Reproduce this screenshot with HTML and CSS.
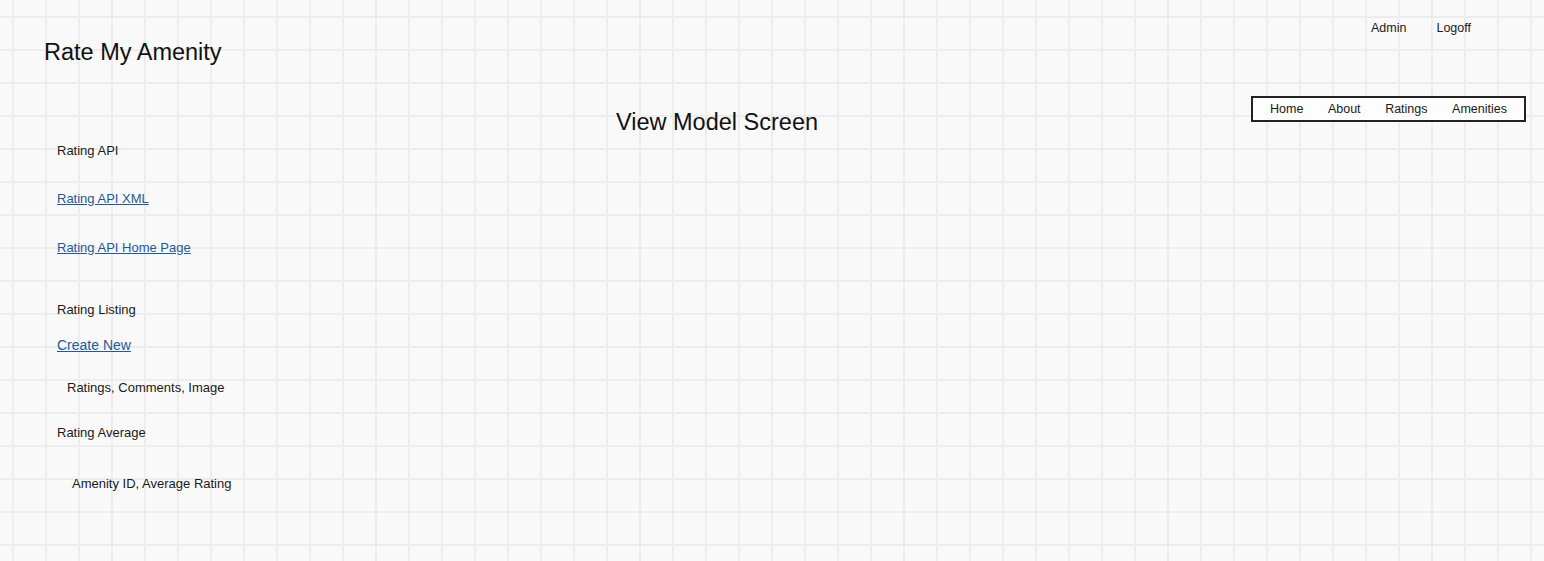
FILE: index.html
```html
<!DOCTYPE html>
<html lang="en">
<head>
<meta charset="utf-8">
<title>Rate My Amenity</title>
<link rel="stylesheet" href="styles.css">
</head>
<body>
<div class="page">
  <div class="row-top">
    <div class="title">Rate My Amenity</div>
    <div class="userlinks">
      <span>Admin</span>
      <span>Logoff</span>
    </div>
  </div>
  <div class="row-nav">
    <h1 class="heading">View Model Screen</h1>
    <nav class="nav">
      <span>Home</span>
      <span>About</span>
      <span>Ratings</span>
      <span>Amenities</span>
    </nav>
  </div>
  <div class="content">
    <div class="item i-api">Rating API</div>
    <a class="item link i-xml" href="#">Rating API XML</a>
    <a class="item link i-home" href="#">Rating API Home Page</a>
    <div class="item i-listing">Rating Listing</div>
    <a class="item link big i-create" href="#">Create New</a>
    <div class="item i-fields">Ratings, Comments, Image</div>
    <div class="item i-avg">Rating Average</div>
    <div class="item i-avgfields">Amenity ID, Average Rating</div>
  </div>
</div>
</body>
</html>
```

FILE: styles.css
```css
html, body {
  margin: 0;
  padding: 0;
}
body {
  background-color: #f9f9f9;
  background-image:
    linear-gradient(to right, #ededed 0, #ededed 2px, transparent 2px),
    linear-gradient(to bottom, #ededed 0, #ededed 2px, transparent 2px);
  background-size: 33px 33px;
  background-position: 12px 16px;
  font-family: "Liberation Sans", Arial, sans-serif;
  color: #1a1a1a;
  min-height: 561px;
}
.page {
  width: 1544px;
}
.row-top {
  display: flex;
  justify-content: space-between;
  align-items: flex-start;
  padding-left: 44px;
  padding-right: 73px;
}
.title {
  margin-top: 38px;
  font-size: 23.5px;
  line-height: 28px;
  color: #111;
}
.userlinks {
  margin-top: 21px;
  display: flex;
  gap: 30px;
  font-size: 12.5px;
  line-height: 15px;
}
.row-nav {
  display: flex;
  justify-content: space-between;
  align-items: flex-start;
  padding-right: 18px;
}
.heading {
  margin: 42px 0 0 616px;
  font-size: 23.5px;
  line-height: 28px;
  font-weight: normal;
  color: #111;
}
.nav {
  margin-top: 30px;
  display: flex;
  gap: 24px;
  padding: 0 17px;
  height: 22px;
  line-height: 23px;
  font-size: 12.5px;
  border: 2px solid #222;
  background: #fdfdfd;
  width: 237px;
  justify-content: space-between;
}
.content {
  display: flex;
  flex-direction: column;
  align-items: flex-start;
  padding-left: 57px;
}
.item {
  font-size: 13px;
  line-height: 16px;
}
.link {
  color: #1f5a96;
  text-decoration: underline;
}
.big {
  font-size: 14px;
  line-height: 17px;
}
.i-api { margin-top: 7px; }
.i-xml { margin-top: 32px; }
.i-home { margin-top: 33px; }
.i-listing { margin-top: 46px; }
.i-create { margin-top: 19px; }
.i-fields { margin-top: 26px; margin-left: 10px; }
.i-avg { margin-top: 29px; }
.i-avgfields { margin-top: 35px; margin-left: 15px; }
```
